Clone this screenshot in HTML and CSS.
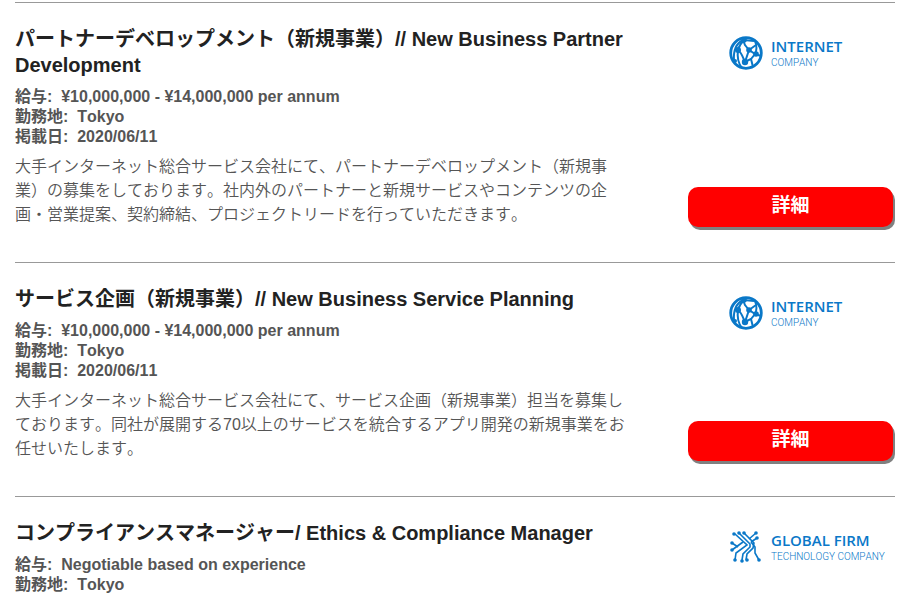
FILE: index.html
```html
<!DOCTYPE html>
<html lang="ja">
<head>
  <meta charset="UTF-8">
  <meta name="viewport" content="width=device-width, initial-scale=1.0">
  <title>求人情報</title>
  <link rel="stylesheet" href="styles.css">
</head>
<body>
  <!-- shared logo marks -->
  <svg class="symbols" aria-hidden="true">
    <symbol id="globe" viewBox="0 0 34 34">
      <circle cx="17" cy="17" r="15.3" fill="none" stroke="currentColor" stroke-width="2.8"/>
      <g fill="none" stroke="currentColor" stroke-width="2">
        <path d="M14 4C8 7 4 13 5 25"/>
        <path d="M9 14C8 21 9 27 13 32"/>
        <path d="M9 14C10 10 12 7 15 4L25 5"/>
        <path d="M9 14C13 17 14 22 16 26L22 23L26 18L20 14L16 26"/>
        <path d="M20 14L16 9L14 4"/>
        <path d="M20 14L27 9"/>
        <path d="M26 18C28 14 28 10 26 5"/>
        <path d="M22 23L24 31M26 18L32 20"/>
      </g>
      <g fill="currentColor">
        <circle cx="9" cy="14" r="3"/>
        <circle cx="15" cy="4" r="2.8"/>
        <circle cx="20" cy="14" r="2.8"/>
        <circle cx="27" cy="18" r="2.8"/>
        <circle cx="16" cy="26" r="3.2"/>
        <circle cx="6" cy="25" r="2"/>
      </g>
    </symbol>
    <symbol id="circuit" viewBox="0 0 34 34">
      <g fill="none" stroke="currentColor" stroke-width="1.6">
        <path d="M6 4L18 15L7 23L6 30"/>
        <path d="M10 3L21 14V17L14 24L13 30"/>
        <path d="M15 3L25 13L24 18L18 24L17 30"/>
        <path d="M27 3L20 9"/>
        <path d="M28 8L22 12"/>
        <path d="M22 12L26 17V23L30 30"/>
        <path d="M3 13L9 17"/>
        <path d="M3 20L14 12"/>
      </g>
      <g fill="currentColor">
        <circle cx="5" cy="4" r="1.8"/>
        <circle cx="10" cy="3" r="1.8"/>
        <circle cx="15" cy="3" r="1.8"/>
        <circle cx="27" cy="3" r="1.8"/>
        <circle cx="28" cy="8" r="1.8"/>
        <circle cx="3" cy="13" r="1.8"/>
        <circle cx="3" cy="20" r="1.8"/>
        <circle cx="6" cy="30" r="1.8"/>
        <circle cx="13" cy="31" r="1.8"/>
        <circle cx="18" cy="30" r="1.8"/>
        <circle cx="30" cy="30" r="1.8"/>
      </g>
    </symbol>
  </svg>

  <main class="job-list">
    <article class="job">
      <div class="job-main">
        <h2 class="job-title">パートナーデベロップメント（新規事業）// New Business Partner Development</h2>
        <ul class="job-meta">
          <li>給与:&nbsp; ¥10,000,000 - ¥14,000,000 per annum</li>
          <li>勤務地:&nbsp; Tokyo</li>
          <li>掲載日:&nbsp; 2020/06/11</li>
        </ul>
        <p class="job-text">大手インターネット総合サービス会社にて、パートナーデベロップメント（新規事業）の募集をしております。社内外のパートナーと新規サービスやコンテンツの企画・営業提案、契約締結、プロジェクトリードを行っていただきます。</p>
      </div>
      <div class="job-side">
        <div class="logo">
          <svg class="logo-mark"><use href="#globe"/></svg>
          <div class="logo-text">
            <span class="logo-name">INTERNET</span>
            <span class="logo-sub">COMPANY</span>
          </div>
        </div>
        <a class="detail-btn" href="#">詳細</a>
      </div>
    </article>

    <article class="job">
      <div class="job-main">
        <h2 class="job-title">サービス企画（新規事業）// New Business Service Planning</h2>
        <ul class="job-meta">
          <li>給与:&nbsp; ¥10,000,000 - ¥14,000,000 per annum</li>
          <li>勤務地:&nbsp; Tokyo</li>
          <li>掲載日:&nbsp; 2020/06/11</li>
        </ul>
        <p class="job-text">大手インターネット総合サービス会社にて、サービス企画（新規事業）担当を募集しております。同社が展開する70以上のサービスを統合するアプリ開発の新規事業をお任せいたします。</p>
      </div>
      <div class="job-side">
        <div class="logo">
          <svg class="logo-mark"><use href="#globe"/></svg>
          <div class="logo-text">
            <span class="logo-name">INTERNET</span>
            <span class="logo-sub">COMPANY</span>
          </div>
        </div>
        <a class="detail-btn" href="#">詳細</a>
      </div>
    </article>

    <article class="job">
      <div class="job-main">
        <h2 class="job-title">コンプライアンスマネージャー/ Ethics &amp; Compliance Manager</h2>
        <ul class="job-meta">
          <li>給与:&nbsp; Negotiable based on experience</li>
          <li>勤務地:&nbsp; Tokyo</li>
        </ul>
      </div>
      <div class="job-side">
        <div class="logo">
          <svg class="logo-mark"><use href="#circuit"/></svg>
          <div class="logo-text">
            <span class="logo-name">GLOBAL FIRM</span>
            <span class="logo-sub">TECHNOLOGY COMPANY</span>
          </div>
        </div>
      </div>
    </article>
  </main>
</body>
</html>
```
FILE: styles.css
```css
body {
  margin: 0;
  background: #fff;
  color: #555;
  font-family: "Liberation Sans", "Noto Sans CJK JP", sans-serif;
  font-size: 16px;
  font-kerning: none;
  text-spacing-trim: space-all;
}

.symbols {
  display: none;
}

.job-list {
  padding: 2px 13px 0 15px;
}

.job {
  display: grid;
  grid-template-columns: 70% 207px;
  justify-content: space-between;
  border-top: 1px solid #999;
  padding: 23px 0 35px;
}

.job:last-child {
  padding-bottom: 0;
}

.job-title {
  margin: 0 0 9px;
  color: #222;
  font-size: 20px;
  line-height: 26px;
}

.job-meta {
  margin: 0;
  padding: 0;
  list-style: none;
  font-weight: bold;
  line-height: 20px;
}

.job-text {
  margin: 8px 0 0;
  font-weight: 350;
  line-height: 24px;
}

.job-side {
  display: flex;
  flex-direction: column;
  justify-content: space-between;
  padding-right: 2px;
}

.logo {
  display: flex;
  align-items: center;
  gap: 8px;
  margin: 9px 0 0 41px;
  color: #0a78c8;
  white-space: nowrap;
}

.logo-mark {
  flex: none;
  width: 34px;
  height: 34px;
}

.logo-text {
  display: flex;
  flex-direction: column;
  gap: 1px;
  padding-top: 3px;
  font-family: "Open Sans", sans-serif;
}

.logo-name {
  font-size: 15px;
  font-weight: 600;
  line-height: 16px;
}

.logo-sub {
  font-family: Roboto, sans-serif;
  font-size: 10px;
  font-weight: 300;
  line-height: 16px;
}

.detail-btn {
  padding: 5px 0 7px;
  border-radius: 10px;
  background: #f00;
  box-shadow: 2px 3px 0 #808080;
  color: #fff;
  font-size: 19px;
  font-weight: bold;
  line-height: 28px;
  text-align: center;
  text-decoration: none;
}
```
